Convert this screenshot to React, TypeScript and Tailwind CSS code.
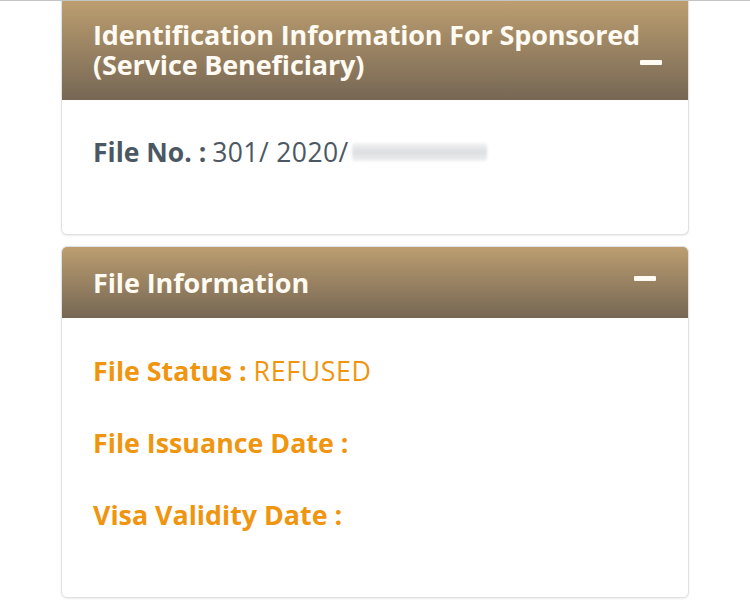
import React from "react";

function Minus() {
  return <span className="block w-[22px] h-[5px] bg-[#fffaf2] rounded-[1px] shrink-0" />;
}

export default function App() {
  return (
    <div className="w-[750px] h-[616px] overflow-hidden bg-white border-t border-[#c4c4c4] font-['Open_Sans',sans-serif]">
      <div className="-mt-px ml-[61px] w-[628px] flex flex-col gap-[11px]">
        {/* Card 1 */}
        <div className="rounded-b-[6px] border border-t-0 border-[#dfe1e3] bg-white shadow-[0_1px_2px_rgba(0,0,0,0.08)] overflow-hidden">
          <div className="h-[100px] bg-gradient-to-b from-[#bc9e70] to-[#766754] border-t border-[#8a7656] pl-[31px] pr-[32px] pb-[20px] flex items-end justify-between">
            <div className="text-[27px] leading-[30px] font-bold text-[#fffaf2] tracking-[-0.15px] whitespace-nowrap">
              <div>Identification Information For Sponsored</div>
              <div>(Service Beneficiary)</div>
            </div>
            <div className="mb-[15px]">
              <Minus />
            </div>
          </div>
          <div className="h-[134px] pl-[31px] pt-[36px]">
            <div className="flex items-center text-[26.5px] leading-[32px] text-[#4b5864]">
              <span className="font-bold">File No. :</span>
              <span className="ml-[6px] tracking-[0.4px]">301/ 2020/</span>
              <span className="ml-[3px] w-[135px] h-[18px] rounded-[3px] bg-gradient-to-b from-[#f3f3f4] via-[#dcdde0] to-[#eeeff0] blur-[1.5px]" />
            </div>
          </div>
        </div>

        {/* Card 2 */}
        <div className="rounded-[6px] border border-[#dfe1e3] bg-white shadow-[0_1px_2px_rgba(0,0,0,0.08)] overflow-hidden">
          <div className="h-[71px] bg-gradient-to-b from-[#bc9e70] to-[#766754] pl-[31px] pr-[32px] flex items-center justify-between">
            <div className="text-[27px] leading-[30px] font-bold text-[#fffaf2] tracking-[-0.1px]">File Information</div>
            <div className="-mt-[8px]">
              <Minus />
            </div>
          </div>
          <div className="h-[279px] pl-[31px] pt-[37px] flex flex-col gap-[40px] text-[26.8px] leading-[32px] text-[#f0950f]">
            <div>
              <span className="font-bold">File Status :</span>
              <span className="ml-[7px] tracking-[0.6px]">REFUSED</span>
            </div>
            <div>
              <span className="font-bold">File Issuance Date :</span>
            </div>
            <div>
              <span className="font-bold">Visa Validity Date :</span>
            </div>
          </div>
        </div>
      </div>
    </div>
  );
}
